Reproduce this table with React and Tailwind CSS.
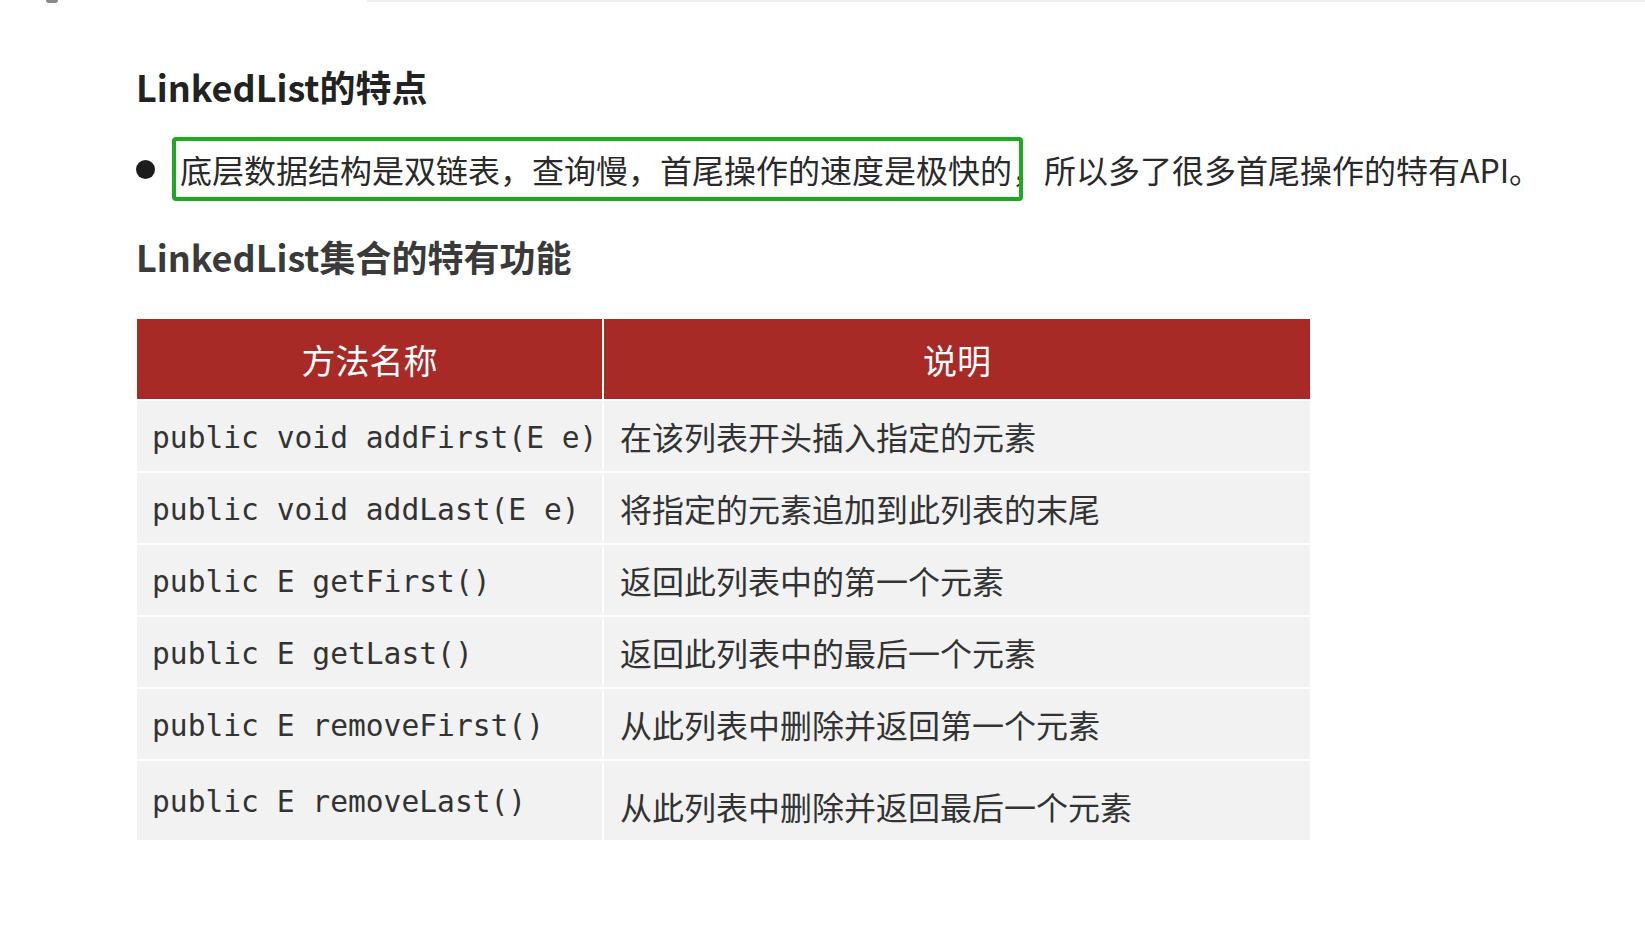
import React from "react";

const rows = [
  { method: "public void addFirst(E e)", desc: "在该列表开头插入指定的元素" },
  { method: "public void addLast(E e)", desc: "将指定的元素追加到此列表的末尾" },
  { method: "public E getFirst()", desc: "返回此列表中的第一个元素" },
  { method: "public E getLast()", desc: "返回此列表中的最后一个元素" },
  { method: "public E removeFirst()", desc: "从此列表中删除并返回第一个元素" },
  { method: "public E removeLast()", desc: "从此列表中删除并返回最后一个元素", tall: true },
];

const cjk = { fontFamily: '"Noto Sans CJK SC", "Noto Sans", sans-serif' };
const mono = { fontFamily: '"DejaVu Sans Mono", "Liberation Mono", "Noto Sans CJK SC", monospace' };

const App = () => {
  return (
    <div className="relative w-[1645px] h-[935px] bg-white overflow-hidden" style={cjk}>
      <div className="absolute top-0 left-[367px] right-0 h-[2px] bg-[#efefef]" />
      <div className="absolute top-0 left-[46px] w-[12px] h-[3px] bg-[#888] rounded-b-full" />

      <div className="pl-[136px] pt-[64px]">
        <h1 className="text-[36px] leading-[44px] font-bold text-[#222]">LinkedList的特点</h1>

        <div className="flex items-center mt-[32px] h-[58px]">
          <span className="w-[19px] h-[19px] rounded-full bg-[#1c1c1c] shrink-0" />
          <p className="ml-[25px] text-[32px] leading-[40px] text-[#2a2a2a] whitespace-nowrap">
            <span className="relative">
              底层数据结构是双链表，查询慢，首尾操作的速度是极快的
              <span className="absolute -left-[8px] -right-[11px] -top-[9px] -bottom-[9px] border-[4px] border-[#1daa1f] rounded-[4px]" />
            </span>
            ，所以多了很多首尾操作的特有API。
          </p>
        </div>

        <h2 className="mt-[36px] text-[36px] leading-[44px] font-bold text-[#3a3a3a]">LinkedList集合的特有功能</h2>

        <div className="mt-[41px] grid grid-cols-[465px_706px] gap-[2px] w-[1173px] ml-[1px]">
          <div className="h-[80px] bg-[#a82a27] flex items-center justify-center text-white text-[34px]">方法名称</div>
          <div className="h-[80px] bg-[#a82a27] flex items-center justify-center text-white text-[34px]">说明</div>
          {rows.map((r) => (
            <React.Fragment key={r.method}>
              <div
                className={`${r.tall ? "h-[79px]" : "h-[70px]"} bg-[#f2f2f2] flex items-center pl-[15px] pt-[4px] text-[29.6px] text-[#333] whitespace-nowrap`}
                style={mono}
              >
                {r.method}
              </div>
              <div
                className={`${r.tall ? "h-[79px] pt-[10px]" : "h-[70px]"} bg-[#f2f2f2] flex items-center pl-[16px] text-[32px] text-[#333] whitespace-nowrap`}
              >
                {r.desc}
              </div>
            </React.Fragment>
          ))}
        </div>
      </div>
    </div>
  );
};

export default App;
